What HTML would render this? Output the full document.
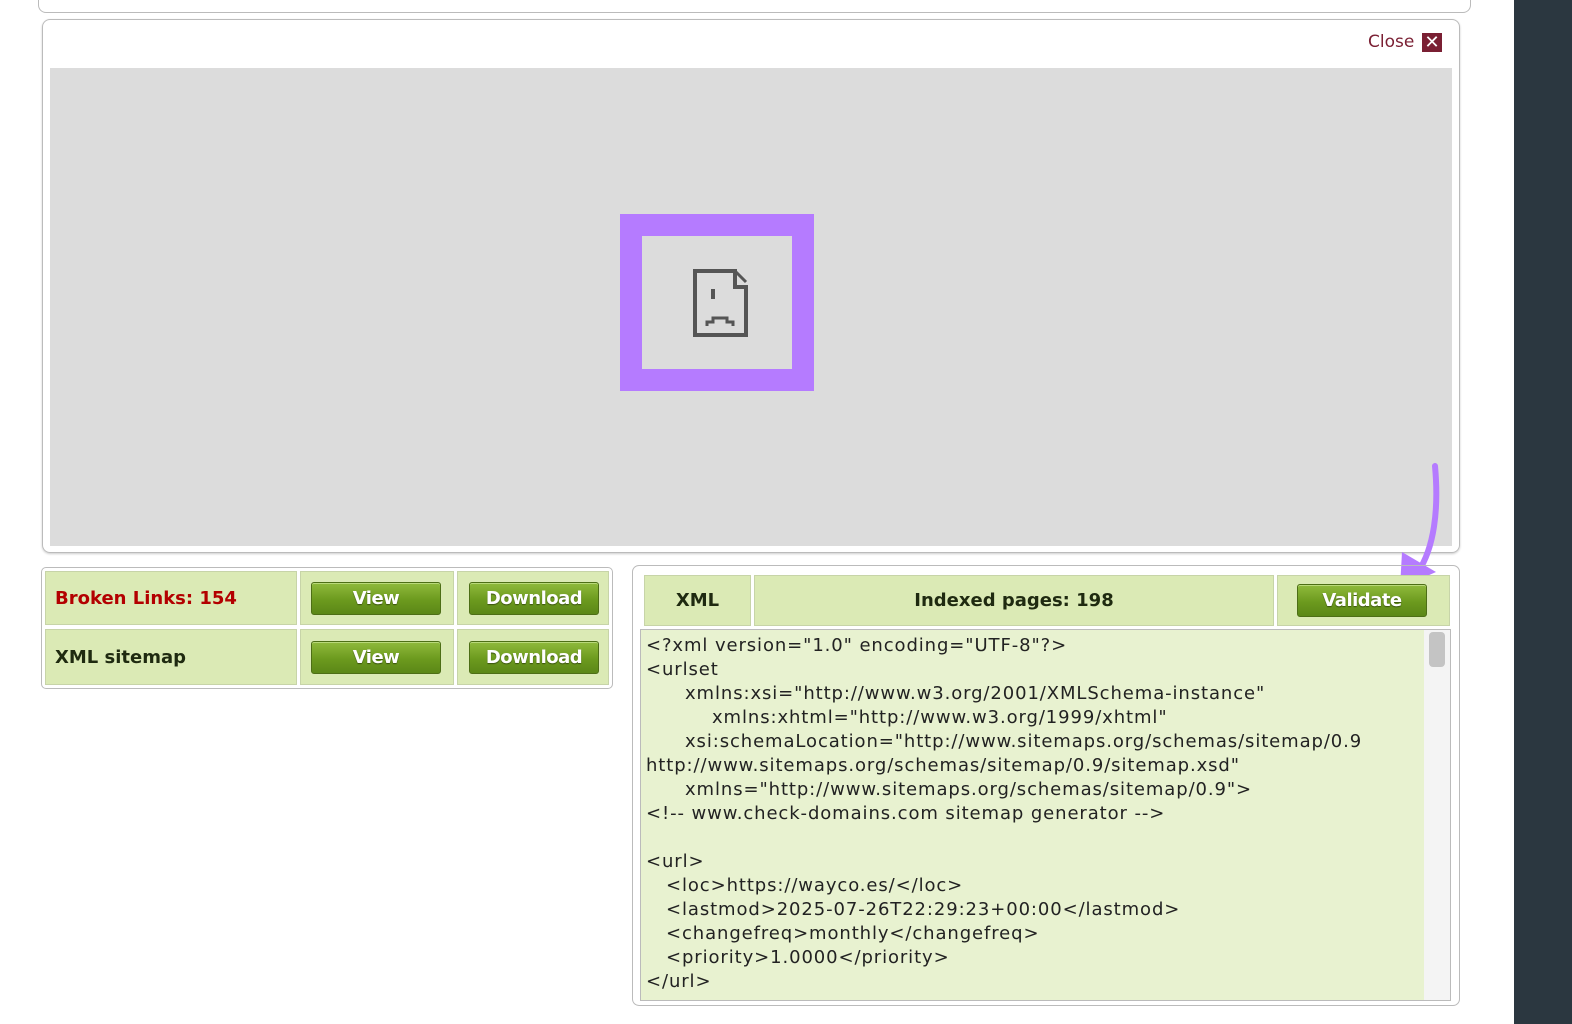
<!DOCTYPE html>
<html><head><meta charset="utf-8"><style>
*{margin:0;padding:0;box-sizing:border-box}
body{width:1572px;height:1024px;background:#fff;position:relative;overflow:hidden;font-family:"Liberation Sans","DejaVu Sans",sans-serif}
.abs{position:absolute}
.cell{position:absolute;background:#dbeab5;border:1px solid #c7d4a8;display:flex;align-items:center;font-weight:bold;font-size:18px;color:#1f2a10;font-family:"DejaVu Sans",sans-serif}
.btn{position:absolute;width:130px;height:33px;border-radius:3px;background:linear-gradient(#8fba3c,#6c9a1e 55%,#5b8717);border:1px solid #4d6e16;box-shadow:inset 0 1px 0 #b9d97a;color:#fff;font-weight:bold;font-size:18px;text-align:center;line-height:31px;text-shadow:0 1px 1px #3a5210;font-family:"DejaVu Sans",sans-serif;letter-spacing:-0.5px}
.code div{position:absolute;left:646px;font-size:18px;color:#222;white-space:pre;font-family:"DejaVu Sans",sans-serif;letter-spacing:0.9px}
</style></head><body>
<div class="abs" style="left:38px;top:-10px;width:1433px;height:23px;border:1px solid #bbb;border-top:none;border-radius:0 0 8px 8px"></div>
<div class="abs" style="left:1514px;top:0;width:58px;height:1024px;background:#2b3740"></div>
<div class="abs" style="left:42px;top:19px;width:1418px;height:534px;border:1px solid #bbb;border-radius:8px;box-shadow:0 1px 2px #ccc"></div>
<div class="abs" style="left:1368px;top:32px;font-size:17px;color:#7a1f33;font-family:'DejaVu Sans',sans-serif">Close</div>
<div class="abs" style="left:1422px;top:33px;width:20px;height:19px;background:#7a1f33;color:#fff;font-size:18px;line-height:19px;text-align:center;font-weight:bold">✕</div>
<div class="abs" style="left:50px;top:68px;width:1402px;height:478px;background:#dcdcdc"></div>
<div class="abs" style="left:620px;top:214px;width:194px;height:177px;border:22px solid #b57bff;background:#dcdcdc"></div>
<svg class="abs" style="left:690px;top:266px" width="60" height="74" viewBox="0 0 60 74">
<path d="M5 5 H45 V21 H56 V69 H5 Z" fill="none" stroke="#555" stroke-width="4"/>
<path d="M45 5 L56 16" stroke="#555" stroke-width="3"/>
<rect x="21" y="23" width="4" height="10" fill="#555"/>
<path d="M17 60 V56 H23 V52 H37 V56 H43 V60" fill="none" stroke="#555" stroke-width="3"/>
</svg>
<svg class="abs" style="left:1390px;top:460px" width="60" height="135"><path d="M45 6 C49 50 44 88 28 112" fill="none" stroke="#b57bff" stroke-width="6" stroke-linecap="round"/><path d="M12 92 L46 112 L10 128 Z" fill="#b57bff"/></svg>
<!-- left table -->
<div class="abs" style="left:41px;top:567px;width:572px;height:122px;border:1px solid #bbb;border-radius:5px"></div>
<div class="cell" style="left:45px;top:571px;width:252px;height:54px;padding-left:9px;color:#b30000">Broken Links: 154</div>
<div class="cell" style="left:300px;top:571px;width:154px;height:54px"></div>
<div class="cell" style="left:457px;top:571px;width:152px;height:54px"></div>
<div class="cell" style="left:45px;top:629px;width:252px;height:56px;padding-left:9px">XML sitemap</div>
<div class="cell" style="left:300px;top:629px;width:154px;height:56px"></div>
<div class="cell" style="left:457px;top:629px;width:152px;height:56px"></div>
<div class="btn" style="left:311px;top:582px">View</div>
<div class="btn" style="left:469px;top:582px">Download</div>
<div class="btn" style="left:311px;top:641px">View</div>
<div class="btn" style="left:469px;top:641px">Download</div>
<!-- right panel -->
<div class="abs" style="left:632px;top:565px;width:828px;height:441px;border:1px solid #bbb;border-radius:7px"></div>
<div class="cell" style="left:644px;top:575px;width:107px;height:51px;justify-content:center">XML</div>
<div class="cell" style="left:754px;top:575px;width:520px;height:51px;justify-content:center">Indexed pages: 198</div>
<div class="cell" style="left:1277px;top:575px;width:173px;height:51px"></div>
<div class="btn" style="left:1297px;top:584px">Validate</div>
<div class="abs" style="left:640px;top:629px;width:811px;height:372px;background:#e8f2d0;border:1px solid #bbb;overflow:hidden"></div>
<div class="abs" style="left:1424px;top:630px;width:26px;height:370px;background:#f4f4f4"></div>
<div class="abs" style="left:1429px;top:632px;width:16px;height:35px;background:#c4c4c4;border-radius:4px"></div>
<div class="code">
<div style="top:635px">&lt;?xml version="1.0" encoding="UTF-8"?&gt;</div>
<div style="top:659px">&lt;urlset</div>
<div style="top:683px;left:685px">xmlns:xsi="http://www.w3.org/2001/XMLSchema-instance"</div>
<div style="top:707px;left:712px">xmlns:xhtml="http://www.w3.org/1999/xhtml"</div>
<div style="top:731px;left:685px">xsi:schemaLocation="http://www.sitemaps.org/schemas/sitemap/0.9</div>
<div style="top:755px">http://www.sitemaps.org/schemas/sitemap/0.9/sitemap.xsd"</div>
<div style="top:779px;left:685px">xmlns="http://www.sitemaps.org/schemas/sitemap/0.9"&gt;</div>
<div style="top:803px">&lt;!-- www.check-domains.com sitemap generator --&gt;</div>
<div style="top:851px">&lt;url&gt;</div>
<div style="top:875px;left:666px">&lt;loc&gt;https://wayco.es/&lt;/loc&gt;</div>
<div style="top:899px;left:666px">&lt;lastmod&gt;2025-07-26T22:29:23+00:00&lt;/lastmod&gt;</div>
<div style="top:923px;left:666px">&lt;changefreq&gt;monthly&lt;/changefreq&gt;</div>
<div style="top:947px;left:666px">&lt;priority&gt;1.0000&lt;/priority&gt;</div>
<div style="top:971px">&lt;/url&gt;</div>
</div>
</body></html>
